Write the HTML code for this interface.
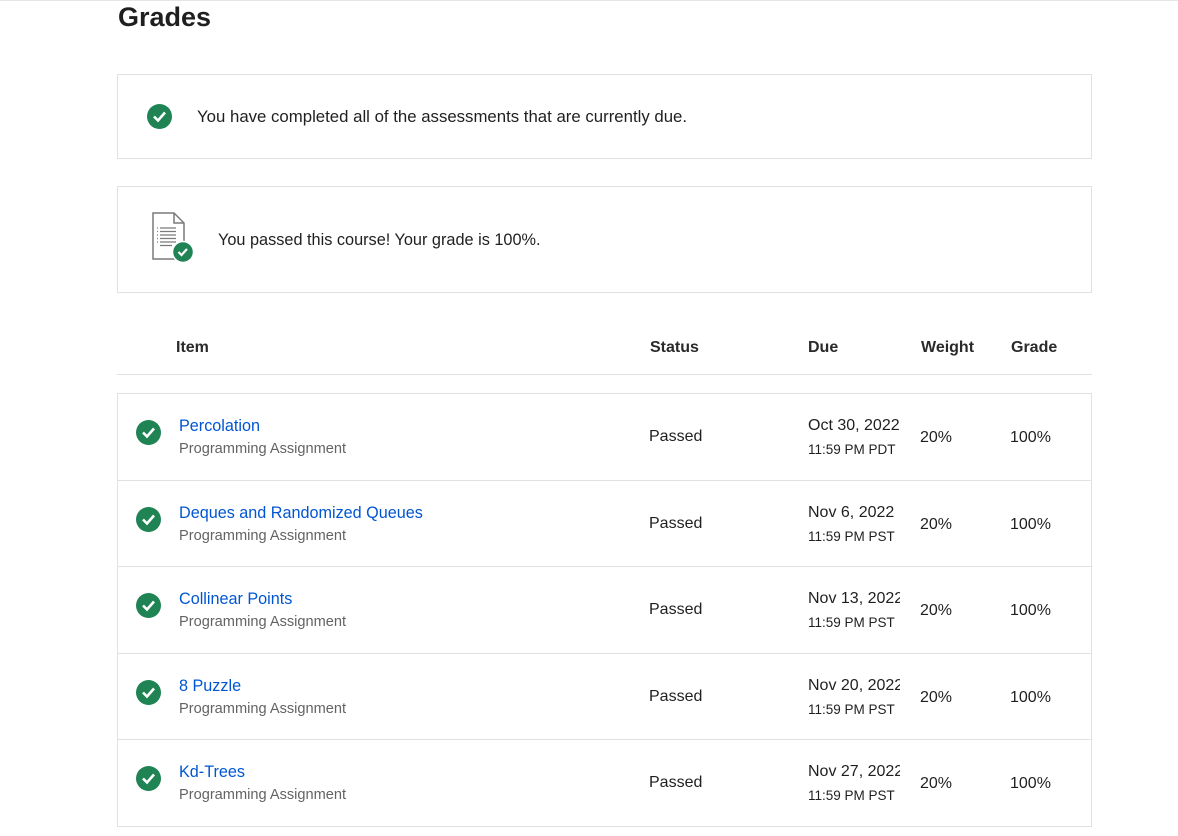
<!DOCTYPE html>
<html><head><style>
*{margin:0;padding:0;box-sizing:border-box}
body{width:1178px;height:836px;background:#fff;font-family:"Liberation Sans",sans-serif;color:#1f1f1f;position:relative;overflow:hidden}
.a{position:absolute;white-space:nowrap}
.box{position:absolute;border:1px solid #e1e1e1;left:117px;width:975px}
.ck{position:absolute;width:25px;height:25px;border-radius:50%;background:#1f8354}
.ck svg{position:absolute;left:0;top:0}
.t{font-size:16px}
.h{font-size:16px;font-weight:bold;color:#2a2a2a}
.lnk{color:#0056d2;font-size:16.2px}
.sub{color:#636363;font-size:14.6px}
.sm{font-size:13.5px}
.row{position:absolute;left:117px;width:975px;border-top:1px solid #e1e1e1}
</style></head><body>
<div class="a" style="left:0;top:0;width:1178px;border-top:1px solid #e5e5e5"></div>
<div class="a" style="left:118px;top:2px;font-size:27px;font-weight:bold">Grades</div>

<div class="box" style="top:74px;height:85px"></div>
<div class="ck" style="left:147px;top:104px"><svg width="25" height="25"><path d="M7 12.5l4 4 7-8" stroke="#fff" stroke-width="2.6" fill="none"/></svg></div>
<div class="a" style="left:197px;top:107px;font-size:16.8px">You have completed all of the assessments that are currently due.</div>

<div class="box" style="top:186px;height:107px"></div>
<svg class="a" style="left:150px;top:212px" width="46" height="52">
<path d="M3 1h21l10 10v36H3z" fill="#fff" stroke="#7a7a7a" stroke-width="1.5"/>
<path d="M24 1v10h10" fill="none" stroke="#7a7a7a" stroke-width="1.5"/>
<g stroke="#7a7a7a" stroke-width="1.3"><path d="M10 16h16M10 19.5h16M10 23h16M10 26.5h16M10 30h16M10 33.5h12"/><path d="M7 16h1M7 19.5h1M7 23h1M7 26.5h1M7 30h1"/></g>
<circle cx="33" cy="40" r="10.5" fill="#1f8354" stroke="#fff" stroke-width="1.5"/>
<path d="M28.5 40l3 3 5.5-6" stroke="#fff" stroke-width="2.2" fill="none"/>
</svg>
<div class="a" style="left:218px;top:231px;font-size:16.3px">You passed this course! Your grade is 100%.</div>

<div class="a h" style="left:176px;top:339px">Item</div>
<div class="a h" style="left:650px;top:339px">Status</div>
<div class="a h" style="left:808px;top:339px">Due</div>
<div class="a h" style="left:921px;top:339px">Weight</div>
<div class="a h" style="left:1011px;top:339px">Grade</div>
<div class="a" style="left:117px;top:374px;width:975px;border-top:1px solid #e1e1e1"></div>

<div class="box" style="top:393px;height:434px"></div>
<div class="row" style="top:480px"></div>
<div class="row" style="top:566px"></div>
<div class="row" style="top:653px"></div>
<div class="row" style="top:739px"></div>

<div class="ck" style="left:136px;top:420px"><svg width="25" height="25"><path d="M7 12.5l4 4 7-8" stroke="#fff" stroke-width="2.6" fill="none"/></svg></div>
<div class="a lnk" style="left:179px;top:417px">Percolation</div>
<div class="a sub" style="left:179px;top:441px">Programming Assignment</div>
<div class="a t" style="left:649px;top:428px">Passed</div>
<div class="a t" style="left:808px;top:417px;width:92px;overflow:hidden">Oct 30, 2022</div>
<div class="a sm" style="left:808px;top:442px">11:59 PM PDT</div>
<div class="a t" style="left:920px;top:429px">20%</div>
<div class="a t" style="left:1010px;top:429px">100%</div>

<div class="ck" style="left:136px;top:507px"><svg width="25" height="25"><path d="M7 12.5l4 4 7-8" stroke="#fff" stroke-width="2.6" fill="none"/></svg></div>
<div class="a lnk" style="left:179px;top:504px">Deques and Randomized Queues</div>
<div class="a sub" style="left:179px;top:528px">Programming Assignment</div>
<div class="a t" style="left:649px;top:515px">Passed</div>
<div class="a t" style="left:808px;top:504px;width:92px;overflow:hidden">Nov 6, 2022</div>
<div class="a sm" style="left:808px;top:529px">11:59 PM PST</div>
<div class="a t" style="left:920px;top:516px">20%</div>
<div class="a t" style="left:1010px;top:516px">100%</div>

<div class="ck" style="left:136px;top:593px"><svg width="25" height="25"><path d="M7 12.5l4 4 7-8" stroke="#fff" stroke-width="2.6" fill="none"/></svg></div>
<div class="a lnk" style="left:179px;top:590px">Collinear Points</div>
<div class="a sub" style="left:179px;top:614px">Programming Assignment</div>
<div class="a t" style="left:649px;top:601px">Passed</div>
<div class="a t" style="left:808px;top:590px;width:92px;overflow:hidden">Nov 13, 2022</div>
<div class="a sm" style="left:808px;top:615px">11:59 PM PST</div>
<div class="a t" style="left:920px;top:602px">20%</div>
<div class="a t" style="left:1010px;top:602px">100%</div>

<div class="ck" style="left:136px;top:680px"><svg width="25" height="25"><path d="M7 12.5l4 4 7-8" stroke="#fff" stroke-width="2.6" fill="none"/></svg></div>
<div class="a lnk" style="left:179px;top:677px">8 Puzzle</div>
<div class="a sub" style="left:179px;top:701px">Programming Assignment</div>
<div class="a t" style="left:649px;top:688px">Passed</div>
<div class="a t" style="left:808px;top:677px;width:92px;overflow:hidden">Nov 20, 2022</div>
<div class="a sm" style="left:808px;top:702px">11:59 PM PST</div>
<div class="a t" style="left:920px;top:689px">20%</div>
<div class="a t" style="left:1010px;top:689px">100%</div>

<div class="ck" style="left:136px;top:766px"><svg width="25" height="25"><path d="M7 12.5l4 4 7-8" stroke="#fff" stroke-width="2.6" fill="none"/></svg></div>
<div class="a lnk" style="left:179px;top:763px">Kd-Trees</div>
<div class="a sub" style="left:179px;top:787px">Programming Assignment</div>
<div class="a t" style="left:649px;top:774px">Passed</div>
<div class="a t" style="left:808px;top:763px;width:92px;overflow:hidden">Nov 27, 2022</div>
<div class="a sm" style="left:808px;top:788px">11:59 PM PST</div>
<div class="a t" style="left:920px;top:775px">20%</div>
<div class="a t" style="left:1010px;top:775px">100%</div>
</body></html>
